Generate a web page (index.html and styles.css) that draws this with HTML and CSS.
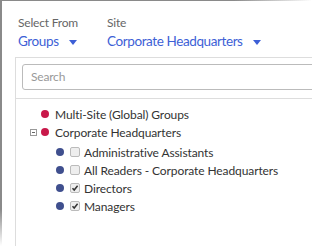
FILE: index.html
```html
<!DOCTYPE html>
<html>
<head>
<meta charset="utf-8">
<link rel="stylesheet" href="styles.css">
</head>
<body>
<div class="frame">
  <div class="header">
    <div class="field field-source">
      <div class="label">Select From</div>
      <div class="value">Groups <span class="caret"></span></div>
    </div>
    <div class="field">
      <div class="label">Site</div>
      <div class="value">Corporate Headquarters <span class="caret"></span></div>
    </div>
  </div>
  <div class="panel">
    <div class="search-wrap">
      <div class="search">Search</div>
    </div>
    <ul class="tree">
      <li class="row row-top"><span class="dot red"></span>Multi-Site (Global) Groups</li>
      <li class="row row-site"><span class="toggle"></span><span class="dot red"></span>Corporate Headquarters</li>
      <li class="children">
        <ul class="sub">
          <li class="row"><span class="dot blue"></span><span class="cb"></span>Administrative Assistants</li>
          <li class="row"><span class="dot blue"></span><span class="cb"></span>All Readers - Corporate Headquarters</li>
          <li class="row"><span class="dot blue"></span><span class="cb checked"><svg viewBox="0 0 8 8" width="8" height="8"><path d="M1.5 4.2 L3.2 6 L6.6 1.8" fill="none" stroke="#333" stroke-width="1.5"/></svg></span>Directors</li>
          <li class="row"><span class="dot blue"></span><span class="cb checked"><svg viewBox="0 0 8 8" width="8" height="8"><path d="M1.5 4.2 L3.2 6 L6.6 1.8" fill="none" stroke="#333" stroke-width="1.5"/></svg></span>Managers</li>
        </ul>
      </li>
    </ul>
  </div>
</div>
</body>
</html>
```
FILE: styles.css
```css
* { box-sizing: border-box; }
html, body { margin: 0; padding: 0; background: #fff; }
body { font-family: "Lato", "Open Sans", "Liberation Sans", sans-serif; }
.frame {
  width: 312px;
  height: 246px;
  overflow: hidden;
  padding: 15px 0 0 15px;
  background:
    linear-gradient(to right, #8a8a8a 0%, #8a8a8a 75%, rgba(138,138,138,0) 100%) top left / 100% 1px no-repeat,
    linear-gradient(to bottom, #8a8a8a 0%, #8a8a8a 85%, rgba(138,138,138,0) 100%) top left / 2px 100% no-repeat,
    #fff;
}
.header { display: flex; padding-left: 3px; }
.field-source { width: 89px; }
.label { font-size: 12px; color: #666; line-height: 16px; letter-spacing: -0.2px; }
.value { font-size: 13.5px; color: #3d5fd6; line-height: 20px; white-space: nowrap; letter-spacing: -0.4px; }
.caret {
  display: inline-block;
  width: 0; height: 0;
  border-left: 4.5px solid transparent;
  border-right: 4.5px solid transparent;
  border-top: 5px solid #3d5fd6;
  vertical-align: middle;
  margin-left: 7px;
}
.panel {
  margin-top: 6px;
  width: 320px;
  height: 200px;
  border-top: 1px solid #ddd;
  border-left: 1px solid #ddd;
}
.search-wrap { padding: 6px 0 8px 6px; border-bottom: 1px solid #ddd; }
.search {
  width: 320px;
  height: 26px;
  border: 1px solid #bbb;
  border-radius: 3px;
  font-size: 12px;
  color: #999;
  line-height: 24px;
  padding-left: 8px;
  letter-spacing: -0.2px;
}
.tree, .sub { list-style: none; margin: 0; padding: 0; }
.tree { padding-top: 6px; }
.row { display: flex; align-items: center; height: 18px; font-size: 12px; color: #333; white-space: nowrap; letter-spacing: -0.1px; }
.row-top { padding-left: 25px; }
.row-site { padding-left: 14px; }
.sub { padding-left: 40px; margin-top: 2px; }
.dot { width: 8px; height: 8px; border-radius: 50%; margin-right: 6px; flex: none; }
.dot.red { background: #c8184a; }
.dot.blue { background: #3f4f8e; }
.toggle {
  width: 7px; height: 7px; border: 1px solid #999; margin-right: 4px; position: relative; flex: none;
}
.toggle::after { content: ""; position: absolute; left: 1px; top: 2px; width: 3px; height: 1px; background: #666; }
.cb {
  width: 10px; height: 10px; border: 1px solid #bbb; border-radius: 2px; background: #eee;
  margin-right: 4px; flex: none; display: flex; align-items: center; justify-content: center;
}
.cb svg { display: block; }
```
